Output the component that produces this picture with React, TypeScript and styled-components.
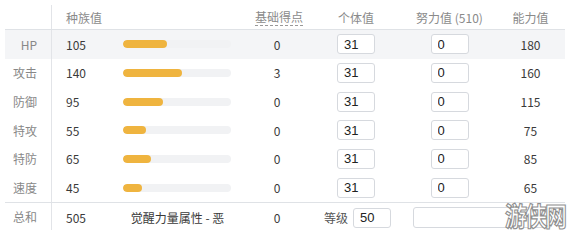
import React from 'react';
import styled, { createGlobalStyle } from 'styled-components';

const stats = [
  { label: 'HP', base: 105, pts: 0, iv: 31, ev: 0, value: 180 },
  { label: '攻击', base: 140, pts: 3, iv: 31, ev: 0, value: 160 },
  { label: '防御', base: 95, pts: 0, iv: 31, ev: 0, value: 115 },
  { label: '特攻', base: 55, pts: 0, iv: 31, ev: 0, value: 75 },
  { label: '特防', base: 65, pts: 0, iv: 31, ev: 0, value: 85 },
  { label: '速度', base: 45, pts: 0, iv: 31, ev: 0, value: 65 },
];

const COLUMNS = '47px 58px 135px 64px 94px 93px 69px';

const App = () => {
  return (
    <>
      <GlobalStyle />
      <Page>
        <Table>
          <Row $head>
            <LabelCell />
            <HeadCell $align="left">种族值</HeadCell>
            <HeadCell />
            <HeadCell>
              <Dashed>基础得点</Dashed>
            </HeadCell>
            <HeadCell>个体值</HeadCell>
            <HeadCell>努力值 (510)</HeadCell>
            <HeadCell>能力值</HeadCell>
          </Row>
          {stats.map((stat, index) => (
            <Row key={stat.label} $highlight={index === 0}>
              <LabelCell>{stat.label}</LabelCell>
              <NumberCell>{stat.base}</NumberCell>
              <Cell>
                <BarTrack>
                  <BarFill style={{ width: `${(stat.base / 255) * 100}%` }} />
                </BarTrack>
              </Cell>
              <Cell $center>{stat.pts}</Cell>
              <Cell $center>
                <NumberInput defaultValue={stat.iv} />
              </Cell>
              <Cell $center>
                <NumberInput defaultValue={stat.ev} />
              </Cell>
              <Cell $center>{stat.value}</Cell>
            </Row>
          ))}
          <Row $total>
            <LabelCell $total>总和</LabelCell>
            <NumberCell>505</NumberCell>
            <Cell $center>觉醒力量属性 - 恶</Cell>
            <Cell $center>0</Cell>
            <LevelCell>
              等级
              <NumberInput defaultValue={50} />
            </LevelCell>
            <SelectCell>
              <Select>
                <Chevron viewBox="0 0 10 10">
                  <path d="M2 3.5 L5 6.5 L8 3.5" fill="none" stroke="#555" strokeWidth="1.4" />
                </Chevron>
              </Select>
            </SelectCell>
          </Row>
        </Table>
        <Watermark>游侠网</Watermark>
      </Page>
    </>
  );
};

export default App;

const GlobalStyle = createGlobalStyle`
  body {
    margin: 0;
    background: #ffffff;
    font-family: "Noto Sans CJK SC", "Liberation Sans", sans-serif;
    font-size: 12px;
    color: #333;
  }
`;

const Page = styled.div`
  position: relative;
  width: 584px;
  height: 240px;
  padding-top: 5px;
  box-sizing: border-box;
  overflow: hidden;
`;

const Table = styled.div`
  margin-left: 5px;
  width: 560px;
  display: flex;
  flex-direction: column;
`;

const Row = styled.div<{ $head?: boolean; $highlight?: boolean; $total?: boolean }>`
  display: grid;
  grid-template-columns: ${COLUMNS};
  height: ${(p) => (p.$head ? '25px' : p.$total ? '31px' : '28.67px')};
  background: ${(p) => (p.$highlight ? '#f4f5f7' : 'transparent')};
  border-bottom: ${(p) => (p.$head ? '1px solid #dfe2e6' : 'none')};
  border-top: ${(p) => (p.$total ? '1px solid #dfe2e6' : 'none')};
  box-sizing: border-box;
`;

const Cell = styled.div<{ $center?: boolean }>`
  display: flex;
  align-items: center;
  justify-content: ${(p) => (p.$center ? 'center' : 'flex-start')};
  color: #3a3a3a;
`;

const LabelCell = styled.div<{ $total?: boolean }>`
  display: flex;
  align-items: center;
  justify-content: flex-end;
  padding-right: 14px;
  color: #888;
  border-right: 1px solid #e2e4e8;
  margin-bottom: ${(p) => (p.$total ? '3px' : '0')};
`;

const HeadCell = styled.div<{ $align?: string }>`
  display: flex;
  align-items: center;
  justify-content: ${(p) => (p.$align === 'left' ? 'flex-start' : 'center')};
  padding-left: ${(p) => (p.$align === 'left' ? '14px' : '0')};
  padding-top: 1px;
  color: #8a8a8a;
`;

const Dashed = styled.span`
  border-bottom: 1px dashed #999;
  line-height: 16px;
  margin-left: 4px;
`;

const NumberCell = styled(Cell)`
  padding-left: 14px;
`;

const BarTrack = styled.div`
  margin-left: 13px;
  width: 108px;
  height: 8px;
  border-radius: 4px;
  background: #f1f2f4;
  overflow: hidden;
`;

const BarFill = styled.div`
  height: 100%;
  border-radius: 4px;
  background: #efb43f;
`;

const NumberInput = styled.input`
  width: 38px;
  height: 20px;
  box-sizing: border-box;
  border: 1px solid #d6d9de;
  border-radius: 3px;
  padding: 0 6px;
  font-family: "Liberation Sans", sans-serif;
  font-size: 13px;
  color: #222;
  background: #fff;
  outline: none;
`;

const LevelCell = styled(Cell)`
  justify-content: flex-start;
  padding-left: 15px;
  gap: 5px;
  color: #555;
`;

const SelectCell = styled(Cell)`
  grid-column: span 2;
  padding-left: 10px;
`;

const Select = styled.div`
  position: relative;
  width: 139px;
  height: 21px;
  box-sizing: border-box;
  border: 1px solid #d6d9de;
  border-radius: 3px;
  background: #fff;
`;

const Chevron = styled.svg`
  position: absolute;
  right: 6px;
  top: 5px;
  width: 10px;
  height: 10px;
`;

const Watermark = styled.div`
  position: absolute;
  left: 505px;
  top: 196px;
  font-size: 22px;
  line-height: 30px;
  font-weight: 700;
  letter-spacing: -2px;
  color: #ffffff;
  -webkit-text-stroke: 1px #8f8f8f;
  transform: scaleY(1.2);
  transform-origin: top left;
  pointer-events: none;
`;
